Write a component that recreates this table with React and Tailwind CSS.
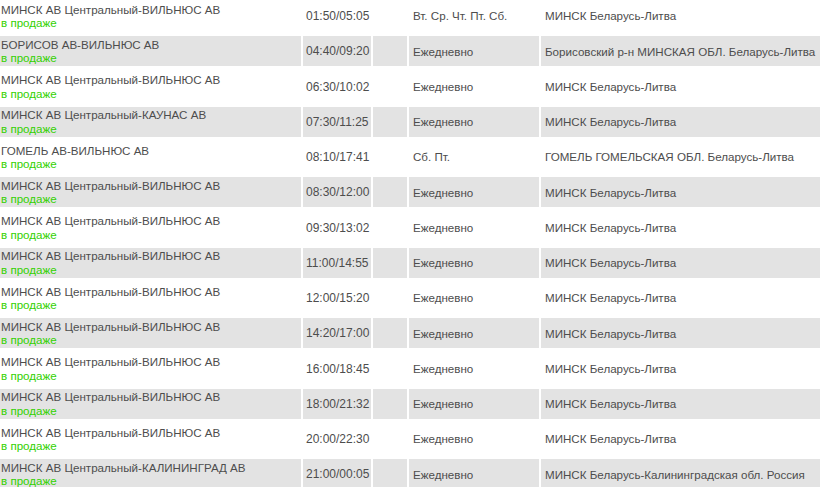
import React from 'react';

const MINSK_VILNIUS = 'МИНСК АВ Центральный-ВИЛЬНЮС АВ';
const MINSK_LT = 'МИНСК Беларусь-Литва';

const trips = [
  { route: MINSK_VILNIUS, time: '01:50/05:05', days: 'Вт. Ср. Чт. Пт. Сб.', from: MINSK_LT },
  { route: 'БОРИСОВ АВ-ВИЛЬНЮС АВ', time: '04:40/09:20', days: 'Ежедневно', from: 'Борисовский р-н МИНСКАЯ ОБЛ. Беларусь-Литва' },
  { route: MINSK_VILNIUS, time: '06:30/10:02', days: 'Ежедневно', from: MINSK_LT },
  { route: 'МИНСК АВ Центральный-КАУНАС АВ', time: '07:30/11:25', days: 'Ежедневно', from: MINSK_LT },
  { route: 'ГОМЕЛЬ АВ-ВИЛЬНЮС АВ', time: '08:10/17:41', days: 'Сб. Пт.', from: 'ГОМЕЛЬ ГОМЕЛЬСКАЯ ОБЛ. Беларусь-Литва' },
  { route: MINSK_VILNIUS, time: '08:30/12:00', days: 'Ежедневно', from: MINSK_LT },
  { route: MINSK_VILNIUS, time: '09:30/13:02', days: 'Ежедневно', from: MINSK_LT },
  { route: MINSK_VILNIUS, time: '11:00/14:55', days: 'Ежедневно', from: MINSK_LT },
  { route: MINSK_VILNIUS, time: '12:00/15:20', days: 'Ежедневно', from: MINSK_LT },
  { route: MINSK_VILNIUS, time: '14:20/17:00', days: 'Ежедневно', from: MINSK_LT },
  { route: MINSK_VILNIUS, time: '16:00/18:45', days: 'Ежедневно', from: MINSK_LT },
  { route: MINSK_VILNIUS, time: '18:00/21:32', days: 'Ежедневно', from: MINSK_LT },
  { route: MINSK_VILNIUS, time: '20:00/22:30', days: 'Ежедневно', from: MINSK_LT },
  { route: 'МИНСК АВ Центральный-КАЛИНИНГРАД АВ', time: '21:00/00:05', days: 'Ежедневно', from: 'МИНСК Беларусь-Калининградская обл. Россия' },
];

const Row = ({ trip, odd }) => {
  const bg = odd ? 'bg-[#e3e3e3]' : 'bg-white';
  return (
    <div className="grid grid-cols-[301px_68px_34px_130px_1fr] gap-x-[2px] h-[30px] shrink-0">
      <div className={`${bg} flex flex-col justify-center pl-[1px] leading-[13.5px] text-[11.6px]`}>
        <div className="whitespace-nowrap">{trip.route}</div>
        <div className="text-[#33d100]">в продаже</div>
      </div>
      <div className={`${bg} flex items-center pl-[3px] whitespace-nowrap`}>{trip.time}</div>
      <div className={bg}></div>
      <div className={`${bg} flex items-center pl-[4px] whitespace-nowrap text-[11.6px]`}>{trip.days}</div>
      <div className={`${bg} flex items-center pl-[4px] whitespace-nowrap text-[11.6px]`}>{trip.from}</div>
    </div>
  );
};

export default function App() {
  return (
    <div className="w-[820px] h-[487px] overflow-hidden bg-white text-[12px] text-[#4d4d4d] font-['Liberation_Sans',Arial,sans-serif]">
      <div className="flex flex-col gap-y-[5.25px] pt-[1px]">
        {trips.map((t, i) => (
          <Row key={i} trip={t} odd={i % 2 === 1} />
        ))}
      </div>
    </div>
  );
}
